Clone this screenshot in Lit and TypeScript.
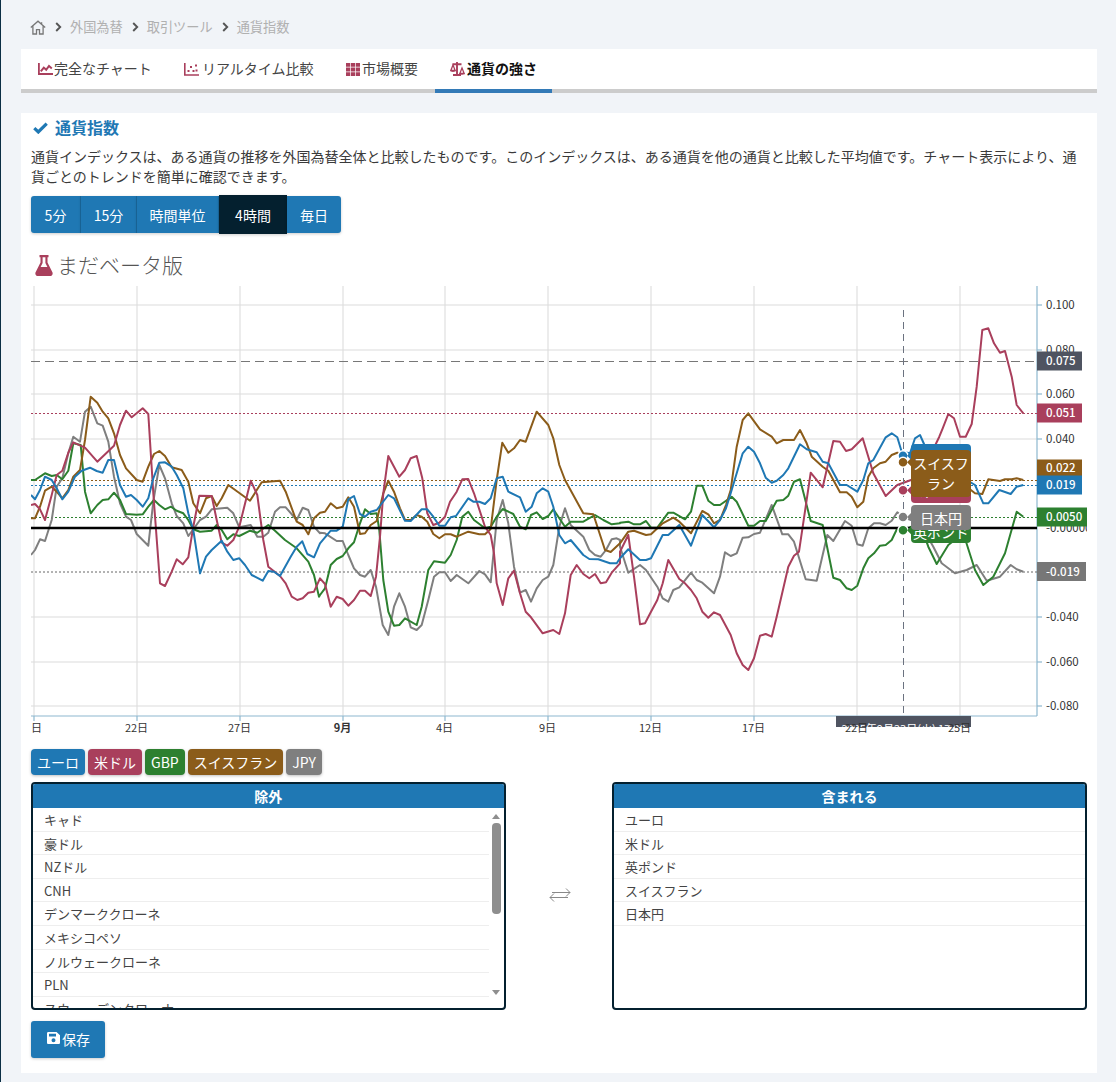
import {LitElement, css, html, svg} from 'lit'
import {customElement} from 'lit/decorators.js'

type Seg = [number, number, number[]]

// traced from the picture, each piece has its own origin and is drawn at 3x
const toPoints = (segs: Seg[]) =>
    segs.map(([ox, oy, p]) =>
    {
        const out: string[] = []
        for(let i = 0; i < p.length; i += 2)
        {
            out.push(`${(ox + p[i] / 3).toFixed(1)},${(oy + p[i + 1] / 3).toFixed(1)}`)
        }
        return out.join(' ')
    }).join(' ')

const SERIES = [
    {color: '#7f7f7f', segs: [
        [20, 380, [33,525,45,510,60,478,75,483,95,420,110,320,127,295,145,220,160,170,180,185,195,95,212,80,232,130,248,137,265,185,282,290,300,370,318,410,333,420,350,462,385,497,400,365,418,255,435,295,455,370,470,408,490,430,505,468,520,448,540,420,558,410,575,388,622,383,640,400,658,442,692,435,712,470,730,470,745,458,765,395,780,382,797,382,830,420,848,383,865,390,882,440,900,460]],
        [320, 380, [0,458,15,460,50,483,68,483,85,525,102,565,120,585,135,590,152,570,168,620,188,735,205,765,222,680,238,640,255,680,272,742,290,750,305,735,325,660,342,590,358,577,375,577,392,603,410,585,445,610,478,573,495,583,512,607,530,420,548,360,565,430,582,560,600,638,617,630,633,665,650,625,668,600,685,590,700,555,718,440,735,385,752,435,790,470,808,510,825,525,842,530,858,510,875,478,890,475,900,480]],
        [620, 380, [0,500,25,578,60,555,78,570,112,620,128,655,145,665,160,630,178,622,213,578,230,600,247,608,282,640,300,590,315,517,332,528,350,520,368,473,385,472,402,462,420,458,455,375,487,463,505,463,522,485,557,598,590,602,622,465,640,483,675,423,695,437,712,493,728,497,745,445,762,430,780,430,797,435,815,422,832,397]],
        [820, 290, [248,681,300,700,340,770,365,820,405,850,440,840,470,825,500,872,540,860,572,825,590,838,610,845]],
    ] as Seg[]},
    {color: '#2d8030', segs: [
        [20, 380, [33,300,45,300,75,280,95,288,110,285,127,298,145,272,160,190,182,195,195,335,212,400,232,375,248,360,265,358,282,338,300,360,318,402,350,404,368,403,385,380,402,360,418,375,435,388,453,380,470,392,490,400,505,420,520,448,540,455,575,452,590,435,605,450,622,478,640,463,658,468,690,452,712,458,745,435,765,452,795,480,830,505,865,545,882,585,897,650]],
        [320, 380, [0,645,15,625,32,555,50,537,68,528,85,505,102,487,120,430,135,388,152,402,170,400,178,450,190,600,205,695,222,737,238,735,255,715,290,735,305,680,325,570,342,544,375,548,392,525,410,480,427,410,445,395,462,420,495,445,512,440,530,410,548,387,580,402,600,440,617,448,633,405,650,397,668,417,685,408,700,388,718,415,735,440,752,425,790,425,825,405,850,420,875,433,900,430]],
        [620, 380, [0,428,25,425,42,433,60,433,78,423,93,443,112,443,145,398,160,398,195,418,213,395,230,317,247,317,265,362,282,375,300,375,335,350,350,365,385,437,402,437,420,423,437,423,470,362,490,360,505,347,522,305,540,298,572,423,608,435,640,593,660,600,680,625,695,630,712,617,730,565,745,535,762,520,780,497,797,495,815,480,832,445]],
        [820, 290, [248,721,300,700,325,770,350,822,385,765,430,730,465,840,490,885,520,860,555,790,590,665,610,680]],
    ] as Seg[]},
    {color: '#8b5c1a', segs: [
        [20, 380, [33,415,45,415,60,380,75,332,95,320,110,335,127,355,145,330,160,290,180,270,195,180,212,50,232,68,248,95,265,115,282,160,300,225,318,265,350,300,368,305,385,260,402,222,418,213,435,228,455,262,485,270,505,305,520,370,540,400,558,355,575,348,590,378,605,355,625,315,690,362,725,307,780,302,797,335,830,425,848,435,865,463,882,415,900,398]],
        [320, 380, [0,398,15,395,32,370,50,385,68,380,85,352,102,380,120,462,135,460,152,435,170,423,190,340,205,302,222,335,240,385,255,420,272,420,290,405,305,410,322,425,340,462,358,475,375,463,392,463,410,470,445,455,478,463,495,463,512,447,530,300,547,188,565,218,582,205,600,180,617,185,650,95,685,135,700,175,718,255,735,300,790,400,820,403,855,510,872,516,900,490]],
        [620, 380, [0,490,25,455,42,452,78,465,93,463,128,430,160,413,178,425,213,460,247,393,265,403,282,430,300,420,318,375,332,330,350,200,368,120,385,100,420,148,455,170,470,190,490,180,522,180,540,150,560,190,575,230,608,260,625,272,660,337,680,337,695,350,712,382,730,365,745,290,760,265,780,250,797,245,815,225,832,218]],
        [820, 290, [300,500,400,560,440,590,465,610,487,612,505,568,540,573,555,568,575,568,590,565,610,570]],
    ] as Seg[]},
    {color: '#a93f5c', segs: [
        [20, 380, [33,375,45,372,60,388,75,420,95,345,110,285,127,272,145,218,160,187,195,203,232,245,282,197,300,135,318,92,335,112,368,85,385,102,400,340,420,610,435,618,455,575,470,538,488,553,505,532,520,440,538,347,575,348,590,420,605,488,622,497,640,480,658,440,692,302,712,345,730,480,745,560,780,588,797,610,815,650,832,660,848,655,865,638,882,635,900,595]],
        [320, 380, [0,595,15,612,32,680,50,650,68,657,85,677,102,660,120,632,135,632,152,648,168,590,180,470,190,340,205,228,222,260,238,290,255,270,272,235,290,228,307,295,322,400,340,435,358,428,375,410,390,365,410,335,427,298,445,297,462,340,495,440,512,465,522,520,530,610,548,675,565,595,582,572,600,640,617,695,633,712,668,760,700,750,718,762,735,700,752,585,770,555,790,582,808,595,825,582,842,610,858,607,875,578,900,550]],
        [620, 380, [0,515,25,465,42,590,60,733,75,730,93,695,112,660,128,610,145,540,178,597,195,610,213,630,230,655,247,695,265,713,282,697,300,705,332,765,350,820,368,855,385,870,402,835,420,767,437,762,455,770,470,710,505,560,522,527,537,515,572,278,608,322,640,183,660,185,678,213,695,208,728,175,760,280,797,348,832,315]],
        [820, 290, [300,560,358,440,368,415,385,372,402,385,420,440,437,440,455,402,470,290,487,120,505,115,522,160,540,188,555,183,575,260,590,345,610,370]],
    ] as Seg[]},
    {color: '#1f78b4', segs: [
        [20, 380, [33,345,45,358,60,330,75,290,95,300,110,325,127,358,145,335,165,290,185,272,210,263,230,273,248,278,265,240,282,240,300,315,318,350,333,345,350,360,368,380,385,355,400,295,418,248,435,247,455,260,470,285,490,325,505,400,520,450,540,580,558,530,575,510,605,482,622,515,640,540,658,535,675,555,695,585,728,602,745,573,762,575,780,588,812,530,830,500,847,484,862,522,882,532,900,490]],
        [320, 380, [0,490,32,452,50,452,68,440,85,358,102,348,120,402,135,410,152,395,170,390,205,345,222,355,255,422,272,423,305,388,322,388,340,410,358,437,375,437,392,412,408,408,445,355,460,365,478,365,495,372,512,355,530,295,548,290,565,335,600,352,617,395,635,380,650,340,668,325,685,335,700,380,718,465,735,490,752,480,790,525,808,537,835,538,870,550,890,550,900,535]],
        [620, 380, [0,535,25,508,60,540,78,540,93,535,128,465,145,465,178,435,213,497,247,405,282,442,300,420,318,385,332,340,368,220,385,200,402,215,420,250,437,293,455,308,470,302,490,285,505,265,540,193,560,208,590,217,608,245,625,250,660,315,680,315,712,335,730,300,745,250,760,240,797,172,815,160,832,172,845,215]],
        [820, 290, [270,490,285,445,300,435,320,480,440,570,465,585,490,640,505,640,538,600,572,612,590,590,610,585]],
    ] as Seg[]},
]

const GRID_X = [34, 137, 240, 343, 445, 548, 651, 754, 857, 960]
const X_LABELS = ['9日', '22日', '27日', '9月', '4日', '9日', '12日', '17日', '22日', '25日']
const GRID_Y: [number, string][] = [[305, '0.100'], [350, '0.080'], [394, '0.060'], [439, '0.040'], [617, '-0.040'], [662, '-0.060'], [706, '-0.080']]

const LEVELS = [
    {y: 361, h: 9.5, w: 45, label: '0.075', color: '#4f5461', line: '#777', dash: '9 5'},
    {y: 413, h: 9.5, w: 45, label: '0.051', color: '#a93f5c', line: '#a93f5c', dash: '2 2'},
    {y: 468, h: 8.5, w: 45, label: '0.022', color: '#8b5c1a', line: '#8b5c1a', dash: '2 2', at: 480},
    {y: 485, h: 9.5, w: 45, label: '0.019', color: '#1f78b4', line: '#1f78b4', dash: '2 2'},
    {y: 517, h: 9.5, w: 50, label: '0.0050', color: '#2d8030', line: '#2d8030', dash: '2 2'},
    {y: 571.5, h: 9.5, w: 49, label: '-0.019', color: '#777', line: '#666', dash: '2 2'},
]

const TIPS = [
    {color: '#1f78b4', top: 444, h: 26, dot: 455.7, lines: [['ユーロ', 457]]},
    {color: '#a93f5c', top: 478, h: 25, dot: 490.3, lines: [['米ドル', 491]]},
    {color: '#2d8030', top: 518, h: 25, dot: 530.3, lines: [['英ポンド', 533]]},
    {color: '#8b5c1a', top: 450, h: 47, dot: 462.3, lines: [['スイスフ', 464], ['ラン', 484]]},
    {color: '#7f7f7f', top: 505, h: 25, dot: 517, lines: [['日本円', 518.5]]},
]

const EXCLUDED = ['キャド', '豪ドル', 'NZドル', 'CNH', 'デンマーククローネ', 'メキシコペソ', 'ノルウェークローネ', 'PLN', 'スウェーデンクローナ']
const INCLUDED = ['ユーロ', '米ドル', '英ポンド', 'スイスフラン', '日本円']

const PERIODS = ['5分', '15分', '時間単位', '4時間', '毎日']
const CHIPS = [
    ['ユーロ', 'blue'],
    ['米ドル', 'pink'],
    ['GBP', 'green'],
    ['スイスフラン', 'brown'],
    ['JPY', 'gray'],
]

const chevron = html`<svg class="chev" width="7" height="10" viewBox="0 0 7 10"><path d="M1.2 1 5.2 5l-4 4" fill="none" stroke="#555" stroke-width="1.9"></path></svg>`

@customElement('app-root')
export class AppRoot extends LitElement
{
    renderChart()
    {
        return html`
            <svg class="chart" width="1056" height="463" viewBox="31 282 1056 463">
                <defs>
                    <clipPath id="plot"><rect x="31" y="282" width="1006" height="434"></rect></clipPath>
                    <clipPath id="stamp"><rect x="836" y="716" width="135" height="11"></rect></clipPath>
                </defs>

                ${GRID_X.map(x => svg`<line class="grid" x1=${x} x2=${x} y1="286" y2="716"></line>
                    <line class="axis" x1=${x} x2=${x} y1="716" y2="721"></line>`)}
                ${GRID_Y.map(([y, label]) => svg`<line class="grid" x1="31" x2="1037" y1=${y} y2=${y}></line>
                    <line class="axis" x1="1037" x2="1042" y1=${y} y2=${y}></line>
                    <text class="tick val" x="1046" y=${y + 4}>${label}</text>`)}

                <line class="axis" x1="31" x2="1037" y1="716" y2="716"></line>
                <line class="axis" x1="1037" x2="1037" y1="286" y2="716"></line>

                <rect class="stamp-box" x="836" y="716" width="135" height="11"></rect>
                <g clip-path="url(#stamp)"><text class="stamp" x="903.5" y="733">2025年9月23日(火) 17:00</text></g>
                ${GRID_X.map((x, i) => svg`<text class="tick ${i == 3 ? 'bold' : ''}" x=${x - 0.5} y="732" text-anchor="middle">${X_LABELS[i]}</text>`)}

                <text class="tick val" x="1046" y="532">-0.00000</text>

                ${LEVELS.map(l => svg`<line x1="31" x2="1037" y1=${(l.at ?? l.y) + 0.5} y2=${(l.at ?? l.y) + 0.5} stroke=${l.line} stroke-dasharray=${l.dash}></line>`)}

                <g clip-path="url(#plot)">
                    ${SERIES.map(s => svg`<polyline class="series" stroke=${s.color} points=${toPoints(s.segs)}></polyline>`)}
                </g>
                <line class="zero" x1="31" x2="1037" y1="528" y2="528"></line>
                <line class="cross" x1="903.5" x2="903.5" y1="310" y2="716"></line>

                ${LEVELS.map(l => svg`<rect x="1037" y=${l.y - l.h} width=${l.w} height=${l.h * 2} fill=${l.color}></rect>
                    <text class="level" x="1046" y=${l.y + 4}>${l.label}</text>`)}

                ${TIPS.map(t => svg`
                    <circle cx="903" cy=${t.dot} r="5" fill=${t.color} stroke="#fff" stroke-width="1.5"></circle>
                    <path d="M907 ${t.dot} L912 ${t.dot - 5} V${t.dot + 5} Z" fill=${t.color}></path>
                    <rect x="911" y=${t.top} width="60" height=${t.h} rx="4" fill=${t.color}></rect>
                    ${t.lines.map(([text, y]) => svg`<text class="tip" x="941" y=${(y as number) + 5} text-anchor="middle">${text}</text>`)}
                `)}
            </svg>
        `
    }

    renderRows(rows: string[])
    {
        return rows.map(r => html`<div class="row">${r}</div>`)
    }

    render()
    {
        return html`
            <nav class="crumbs">
                <svg class="home" width="16" height="15" viewBox="0 0 16 15"><path d="M.8 7.6 8 1.2l7.2 6.4M2.9 6.2V14h3.6V9.6h3V14h3.6V6.2M11.6 2.2v2" fill="none" stroke="#777" stroke-width="1.3"></path></svg>
                ${chevron}
                <span>外国為替</span>
                ${chevron}
                <span>取引ツール</span>
                ${chevron}
                <span>通貨指数</span>
            </nav>

            <div class="tabs">
                <a class="tab one">
                    <svg width="15" height="12" viewBox="0 0 15 12"><path d="M.9 0v11H15" fill="none" stroke="#a93f5c" stroke-width="1.800"></path><path d="M2.800 8.400 5.800 4.600l2.400 2.200L11 3l2.800 2.400" fill="none" stroke="#a93f5c" stroke-width="2"></path></svg>
                    <span class="lift">完全なチャート</span>
                </a>
                <a class="tab two">
                    <svg width="15" height="13" viewBox="0 0 15 13"><path d="M.8 0v12H15" fill="none" stroke="#a93f5c" stroke-width="1.600"></path><path d="M3.500 7h2v2h-2zM6 3h2v2H6zM8.500 7h2v2h-2zM11 1.500h2v2h-2zM11.500 6.500h2v2h-2z" fill="#a93f5c"></path></svg>
                    <span class="lift">リアルタイム比較</span>
                </a>
                <a class="tab three">
                    <svg width="14" height="13" viewBox="0 0 14 13"><path d="M0 0h4.200v3.800H0zM4.900 0h4.200v3.800H4.900zM9.800 0H14v3.800H9.800zM0 4.600h4.200v3.800H0zM4.900 4.600h4.200v3.800H4.900zM9.800 4.600H14v3.800H9.800zM0 9.200h4.200V13H0zM4.900 9.200h4.200V13H4.900zM9.800 9.200H14V13H9.800z" fill="#a93f5c"></path></svg>
                    <span class="lift">市場概要</span>
                </a>
                <a class="tab active">
                    <svg width="16" height="14" viewBox="0 0 16 14"><path d="M7 0v12.500M2.500 2.200h9M3 13h8" fill="none" stroke="#a93f5c" stroke-width="1.900"></path><path d="M3 3 .8 8.500h4.400zM12 6 9.800 11.500h4.400z" fill="none" stroke="#a93f5c" stroke-width="1.300"></path><path d="M.3 8.300h5.400c-.4 2.200-5 2.200-5.400 0zM9.300 11.300h5.400c-.4 1.800-5 1.800-5.400 0z" fill="#a93f5c"></path></svg>
                    <span class="lift">通貨の強さ</span>
                </a>
            </div>

            <section class="card">
                <h3 class="title">
                    <svg width="15" height="12" viewBox="0 0 15 12"><path d="M1.300 6.200 5.300 10 13.700 1.700" fill="none" stroke="#1f78b4" stroke-width="3.200"></path></svg>
                    <span class="lift">通貨指数</span>
                </h3>
                <p class="intro">通貨インデックスは、ある通貨の推移を外国為替全体と比較したものです。このインデックスは、ある通貨を他の通貨と比較した平均値です。チャート表示により、通貨ごとのトレンドを簡単に確認できます。</p>

                <div class="periods">
                    ${PERIODS.map(p => html`<button class="${p == '4時間' ? 'on' : ''}">${p}</button>`)}
                </div>

                <h4 class="beta">
                    <svg width="18" height="21" viewBox="0 0 18 21"><path d="M4.500 0h9v2.200h-1V7.500l4.900 9.700c.8 1.800-.3 3.800-2.300 3.800H2.900C.9 21-.2 19 .6 17.200L5.500 7.500V2.200h-1zM7.600 2.200v5.900L5.600 12h6.800l-2-3.900V2.200z" fill="#a93f5c" fill-rule="evenodd"></path></svg>
                    <span class="lift">まだベータ版</span>
                </h4>

                ${this.renderChart()}

                <div class="chips">
                    ${CHIPS.map(([label, color]) => html`<span class="chip ${color}">${label}</span>`)}
                </div>

                <div class="pickers">
                    <div class="box">
                        <div class="box-head">除外</div>
                        <div class="box-body">
                            <div class="rows">${this.renderRows(EXCLUDED)}</div>
                            <div class="bar">
                                <i class="up"></i>
                                <b class="thumb"></b>
                                <i class="down"></i>
                            </div>
                        </div>
                    </div>
                    <div class="swap">
                        <svg width="22" height="14" viewBox="0 0 22 14"><path d="M3 4.500H21M17 .5l4 4-4 4M19 9.500H1M5 5.500l-4 4 4 4" fill="none" stroke="#888" stroke-width="1"></path></svg>
                    </div>
                    <div class="box">
                        <div class="box-head">含まれる</div>
                        <div class="box-body">
                            <div class="rows">${this.renderRows(INCLUDED)}</div>
                        </div>
                    </div>
                </div>

                <button class="save">
                    <svg width="13" height="12" viewBox="0 0 13 12"><path d="M1.300 0h8.200L13 3.200v7.500c0 .7-.6 1.300-1.300 1.300H1.300C.6 12 0 11.400 0 10.700V1.300C0 .6.600 0 1.300 0zM2 1.800v2.700h7V1.800zM6.500 6.200a2 2 0 1 0 0 4 2 2 0 0 0 0-4z" fill="#fff" fill-rule="evenodd"></path></svg>
                    <span class="lift">保存</span>
                </button>
            </section>
        `
    }

    static styles = css`
        :host
        {
            display: block;
            box-sizing: border-box;
            min-height: 1082px;
            padding: 17px 19px 10px 20px;
            border-left: 1px solid #0b2e44;
            background: #f1f4f8;
            color: #3a3a3a;
            font-family: "Noto Sans CJK JP", "Noto Sans", sans-serif;
            font-size: 14px;
            line-height: 20px;
        }

        .lift { padding-bottom: 2px; }

        .crumbs
        {
            display: flex;
            align-items: center;
            height: 20px;
            padding-left: 9px;
            color: #b0b0b0;
            font-size: 13.2px;
        }

        .home { margin-right: 9px; }
        .chev { margin-right: 8px; }
        .crumbs span { margin-right: 9px; }

        .tabs
        {
            display: flex;
            height: 40px;
            margin-top: 12px;
            background: #fff;
            border-bottom: 4px solid #ccc;
        }

        .tab
        {
            display: flex;
            align-items: center;
            gap: 1.5px;
            height: 40px;
            box-sizing: border-box;
            padding-left: 16.5px;
            color: #444;
            white-space: nowrap;
        }

        .one { width: 147px; }
        .two { width: 162px; padding-left: 16px; gap: 3px; }
        .three { width: 105px; padding-left: 16px; gap: 2px; }

        .active
        {
            width: 117px;
            height: 44px;
            padding-left: 15px;
            gap: 1px;
            color: #111;
            font-weight: 700;
            border-bottom: 4px solid #337ab7;
        }

        .card
        {
            margin-top: 20px;
            padding: 5px 10px 15px;
            background: #fff;
        }

        .title
        {
            display: flex;
            align-items: center;
            gap: 7px;
            height: 20px;
            margin: 0 0 0 2px;
            color: #1f78b4;
            font-size: 16px;
            line-height: 20px;
        }

        .intro
        {
            margin: 8px 0 9px;
            padding-bottom: 1px;
            font-size: 14px;
        }

        .periods { display: flex; height: 37px; }

        .periods button
        {
            width: 56px;
            border: 0;
            border-right: 1px solid #1a6a9f;
            padding: 0;
            background: #1f78b4;
            color: #fff;
            font: inherit;
            box-shadow: 0 1px 3px rgba(0, 0, 0, .2);
        }

        .periods button:nth-child(1) { width: 50px; border-radius: 3px 0 0 3px; }
        .periods button:nth-child(3) { width: 82px; }
        .periods button:nth-child(5) { width: 54px; border-radius: 0 3px 3px 0; border-right: 0; }

        .periods .on
        {
            width: 68px;
            height: 39px;
            margin-top: -1px;
            background: #04202f;
            border-right: 0;
        }

        .beta
        {
            display: flex;
            align-items: center;
            gap: 4px;
            height: 30px;
            margin: 17px 0 2px 4px;
            color: #555;
            font-size: 21px;
            font-weight: 300;
        }

        .chart { display: block; overflow: hidden; }

        .grid { stroke: #dcdcdc; stroke-width: 1.1; }
        .axis { stroke: #8db8cf; stroke-width: 1.2; }
        .zero { stroke: #000; stroke-width: 2.4; }
        .cross { stroke: #6b7280; stroke-width: 1; stroke-dasharray: 7 5; }
        .series { fill: none; stroke-width: 2; stroke-linejoin: round; }
        .tick { fill: #333; font-size: 11px; }
        .val { font-size: 11.5px; }
        .bold { font-weight: 700; }
        .level { fill: #fff; font-size: 11.5px; font-weight: 500; }
        .tip { fill: #fff; font-size: 14px; }
        .stamp-box { fill: #4f5461; }
        .stamp { fill: #fff; font-size: 11px; text-anchor: middle; }

        .chips
        {
            display: flex;
            gap: 3px;
            margin-top: 4px;
        }

        .chip
        {
            height: 26px;
            padding: 0 6px;
            border-radius: 4px;
            color: #fff;
            line-height: 26px;
            box-shadow: 0 1px 3px rgba(0, 0, 0, .25);
        }

        .blue { background: #1f78b4; }
        .pink { background: #a93f5c; }
        .green { background: #2d8030; }
        .brown { background: #8b5c1a; }
        .gray { background: #7f7f7f; }

        .pickers
        {
            display: grid;
            grid-template-columns: 474.5px 1fr 475px;
            margin-top: 7px;
        }

        .box
        {
            display: flex;
            flex-direction: column;
            box-sizing: border-box;
            height: 228px;
            border: 2px solid #04202f;
            border-radius: 4px;
            overflow: hidden;
        }

        .box-head
        {
            flex: none;
            height: 24px;
            background: #1f78b4;
            color: #fff;
            font-weight: 700;
            line-height: 25px;
            text-align: center;
        }

        .box-body
        {
            display: flex;
            flex: 1;
            min-height: 0;
        }

        .rows
        {
            flex: 1;
            overflow: hidden;
        }

        .row
        {
            box-sizing: border-box;
            height: 23.6px;
            padding: 0 11px;
            border-bottom: 1px solid #eee;
            color: #444;
            font-size: 13px;
            line-height: 23px;
            white-space: nowrap;
        }

        .bar
        {
            display: flex;
            flex: none;
            flex-direction: column;
            align-items: center;
            width: 15px;
            padding-top: 6px;
        }

        .up, .down
        {
            width: 0;
            height: 0;
            border-left: 4px solid transparent;
            border-right: 4px solid transparent;
        }

        .up { border-bottom: 5px solid #8e8e8e; }
        .down { margin-top: 76px; border-top: 5px solid #8e8e8e; }

        .thumb
        {
            width: 9px;
            height: 91px;
            margin-top: 4px;
            border-radius: 4px;
            background: #8e8e8e;
        }

        .swap
        {
            display: flex;
            align-items: center;
            padding-left: 43.5px;
            padding-bottom: 3px;
        }

        .save
        {
            display: flex;
            align-items: center;
            gap: 2px;
            width: 74px;
            height: 37px;
            margin-top: 11px;
            padding: 0 0 0 16px;
            border: 0;
            border-radius: 3px;
            background: #1f78b4;
            color: #fff;
            font: inherit;
            box-shadow: 0 1px 3px rgba(0, 0, 0, .2);
        }

        .save svg { margin-top: -4px; }
    `
}

declare global
{
    interface HTMLElementTagNameMap
    {
        'app-root': AppRoot
    }
}
